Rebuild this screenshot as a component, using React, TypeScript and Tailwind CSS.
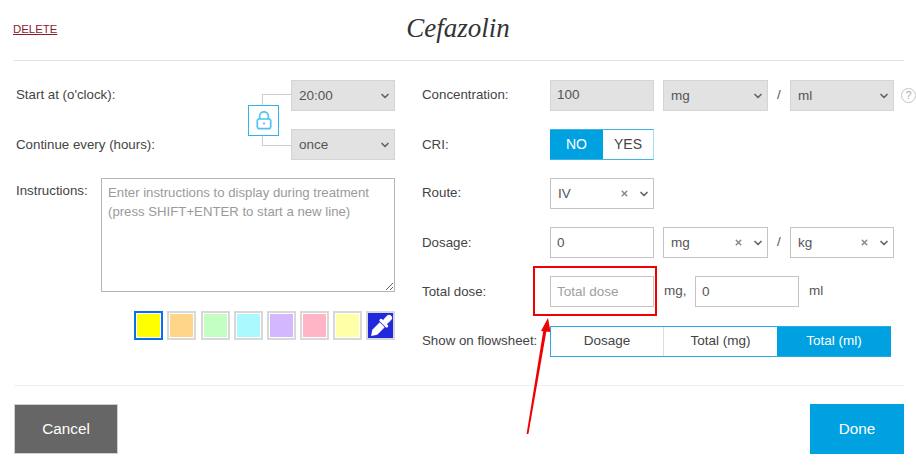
import React from "react";
import { ChevronDown, X } from "lucide-react";

const swatches = ["#ffff00", "#ffd58a", "#c3ffc3", "#a9f9ff", "#d4b8ff", "#ffb5c5", "#ffffa8"];

const FakeSelect = ({
  value,
  width,
  disabled,
  clearable,
}: {
  value: string;
  width: string;
  disabled?: boolean;
  clearable?: boolean;
}) => (
  <div
    className={`flex h-[31px] items-center justify-between pl-[7px] pr-[3px] border ${width} ${
      disabled ? "bg-[#e2e2e2] border-[#d4d4d4]" : "bg-white border-[#c4c4c4]"
    }`}
  >
    <span className="pt-px text-[13.5px] text-[#555]">{value}</span>
    <span className="flex items-center gap-[9px]">
      {clearable && <X className="w-[9px] h-[9px] text-[#888]" strokeWidth={4} />}
      <ChevronDown className="w-[12px] h-[12px] text-[#666]" strokeWidth={3.5} />
    </span>
  </div>
);

const Row = ({
  label,
  children,
  className,
  lift,
}: {
  label: string;
  children: React.ReactNode;
  className?: string;
  lift?: boolean;
}) => (
  <div className={`flex h-[31px] items-center ${className ?? ""}`}>
    <div className={`w-[128px] shrink-0 text-[13.3px] text-[#444] ${lift ? "pb-[2px]" : ""}`}>{label}</div>
    {children}
  </div>
);

export default function App() {
  return (
    <div className="relative w-[916px] h-[467px] bg-white overflow-hidden pl-[14px] pr-[12px] font-['Liberation_Sans',Arial,sans-serif]">
      <header className="relative flex h-[61px] items-center justify-center border-b border-[#e2e2e2]">
        <a className="absolute left-0 top-[23px] -ml-px text-[11.4px] leading-[12px] text-[#8a1c2e] underline">DELETE</a>
        <h1 className="pb-[4px] pr-[2px] font-['Liberation_Serif',serif] italic text-[27px] text-[#333]">Cefazolin</h1>
      </header>

      <div className="flex h-[325px] border-b border-[#eeeeee] pt-[19px]">
        <div className="relative w-[381px] shrink-0">
          <div className="flex h-[31px] items-center justify-between">
            <span className="pl-[2px] pb-[2px] text-[13.3px] text-[#444]">Start at (o'clock):</span>
            <FakeSelect value="20:00" width="w-[104px]" disabled />
          </div>
          <div className="mt-[18px] flex h-[31px] items-center justify-between">
            <span className="pl-[2px] text-[13.3px] text-[#444]">Continue every (hours):</span>
            <FakeSelect value="once" width="w-[104px]" disabled />
          </div>

          {/* lock linking the two selects */}
          <div className="absolute left-[248px] top-[14px] h-[52px] w-[29px] border-y border-l border-[#cccccc]" />
          <div className="absolute left-[234px] top-[25px] flex h-[31px] w-[31px] items-center justify-center border border-[#29b6ea] bg-white">
            <svg width="16" height="19" viewBox="0 0 16 19" fill="none" stroke="#4ec3ef" strokeWidth="1.7">
              <path d="M3.6 8V5.2a4.4 4.4 0 0 1 8.8 0V8" />
              <rect x="1.3" y="8" width="13.4" height="9.6" rx="1.8" />
              <circle cx="8" cy="12.6" r="1.1" fill="#4ec3ef" stroke="none" />
            </svg>
          </div>

          <div className="mt-[18px] flex justify-between">
            <span className="pl-[2px] pt-[3px] text-[13.3px] text-[#444]">Instructions:</span>
            <textarea
              className="block h-[114px] w-[294px] border border-[#b4b4b4] px-[6px] py-[4px] text-[13.2px] leading-[19px] outline-none placeholder:text-[#9a9a9a]"
              placeholder="Enter instructions to display during treatment (press SHIFT+ENTER to start a new line)"
            />
          </div>

          <div className="mt-[19px] flex justify-end gap-[4.1px]">
            {swatches.map((color, i) => (
              <div
                key={color}
                className={`h-[29px] w-[29px] border-2 p-px ${i === 0 ? "border-[#0a6ef0]" : "border-[#d8d8d8]"}`}
              >
                <div className="h-full w-full" style={{ background: color }} />
              </div>
            ))}
            <div className="flex h-[29px] w-[29px] items-center justify-center overflow-hidden border-2 border-[#d8d8d8] bg-[#2229dc]">
              <svg className="shrink-0" width="30" height="30" viewBox="0 0 24 24" fill="white">
                <g transform="rotate(45 12 12)">
                  <rect x="9.6" y="0.5" width="4.8" height="8" rx="2.4" />
                  <rect x="7.6" y="7.6" width="8.8" height="2.4" rx="1" />
                  <path d="M9.2 10.6h5.6v8.4l-2.8 4.2-2.8-4.2z" />
                </g>
              </svg>
            </div>
          </div>
        </div>

        <div className="ml-[27px] flex-1">
          <Row label="Concentration:" lift>
            <input
              readOnly
              value="100"
              className="h-[31px] w-[104px] border border-[#d4d4d4] bg-[#e2e2e2] px-[6px] pb-[2px] text-[13.5px] text-[#555] outline-none"
            />
            <div className="ml-[9px]">
              <FakeSelect value="mg" width="w-[105px]" disabled />
            </div>
            <span className="w-[22px] text-center text-[13.5px] text-[#555]">/</span>
            <FakeSelect value="ml" width="w-[104px]" disabled />
            <span className="ml-[7px] flex h-[15px] w-[15px] items-center justify-center rounded-full border border-[#c4c4c4] text-[11px] text-[#aaa]">
              ?
            </span>
          </Row>

          <Row label="CRI:" className="mt-[18px]">
            <div className="flex h-[31px] w-[104px] border-y border-r border-y-[#3fb3e6] border-r-[#a0defa] text-[14px]">
              <span className="flex w-[53px] items-center justify-center bg-[#00a1e0] text-white">NO</span>
              <span className="flex flex-1 items-center justify-center text-[#444]">YES</span>
            </div>
          </Row>

          <Row label="Route:" className="mt-[18px]" lift>
            <FakeSelect value="IV" width="w-[104px]" clearable />
          </Row>

          <Row label="Dosage:" className="mt-[18px]">
            <input
              readOnly
              value="0"
              className="h-[31px] w-[104px] border border-[#c4c4c4] px-[6px] text-[13.5px] text-[#555] outline-none"
            />
            <div className="ml-[9px]">
              <FakeSelect value="mg" width="w-[105px]" clearable />
            </div>
            <span className="w-[22px] text-center text-[13.5px] text-[#555]">/</span>
            <FakeSelect value="kg" width="w-[104px]" clearable />
          </Row>

          <Row label="Total dose:" className="mt-[18px]">
            <input
              readOnly
              placeholder="Total dose"
              className="h-[31px] w-[104px] border border-[#c4c4c4] px-[6px] text-[13.5px] outline-none placeholder:text-[#a0a0a0]"
            />
            <span className="ml-[10px] w-[31px] text-[13.5px] text-[#555]">mg,</span>
            <input
              readOnly
              value="0"
              className="h-[31px] w-[104px] border border-[#c4c4c4] px-[6px] text-[13.5px] text-[#555] outline-none"
            />
            <span className="ml-[10px] text-[13.5px] text-[#555]">ml</span>
          </Row>

          <Row label="Show on flowsheet:" className="mt-[19px]" lift>
            <div className="flex h-[31px] w-[341px] border-y border-l border-[#29a9e4] text-[13.5px] text-[#444]">
              <span className="flex w-[113px] items-center justify-center border-r border-[#dddddd]">Dosage</span>
              <span className="flex w-[113px] items-center justify-center">Total (mg)</span>
              <span className="flex flex-1 items-center justify-center bg-[#00a1e0] text-white">Total (ml)</span>
            </div>
          </Row>
        </div>
      </div>

      <footer className="flex justify-between pt-[18px]">
        <button className="h-[50px] w-[104px] border border-[#cfcfcf] bg-[#666666] pt-px text-[15.3px] text-white">
          Cancel
        </button>
        <button className="h-[50px] w-[94px] bg-[#00a1e0] pt-px text-[15.3px] text-white">Done</button>
      </footer>

      {/* annotation over the screenshot */}
      <div className="absolute left-[533px] top-[266px] h-[50px] w-[124px] border-[2.5px] border-[#f00000]" />
      <svg className="absolute left-0 top-0 pointer-events-none" width="916" height="467" fill="none">
        <path d="M526.6 434 L528.4 434 L546.6 330 L543.4 330 Z" fill="#f00000" />
        <path d="M548 318 L541 331 L550.5 332 Z" fill="#f00000" />
      </svg>
    </div>
  );
}
